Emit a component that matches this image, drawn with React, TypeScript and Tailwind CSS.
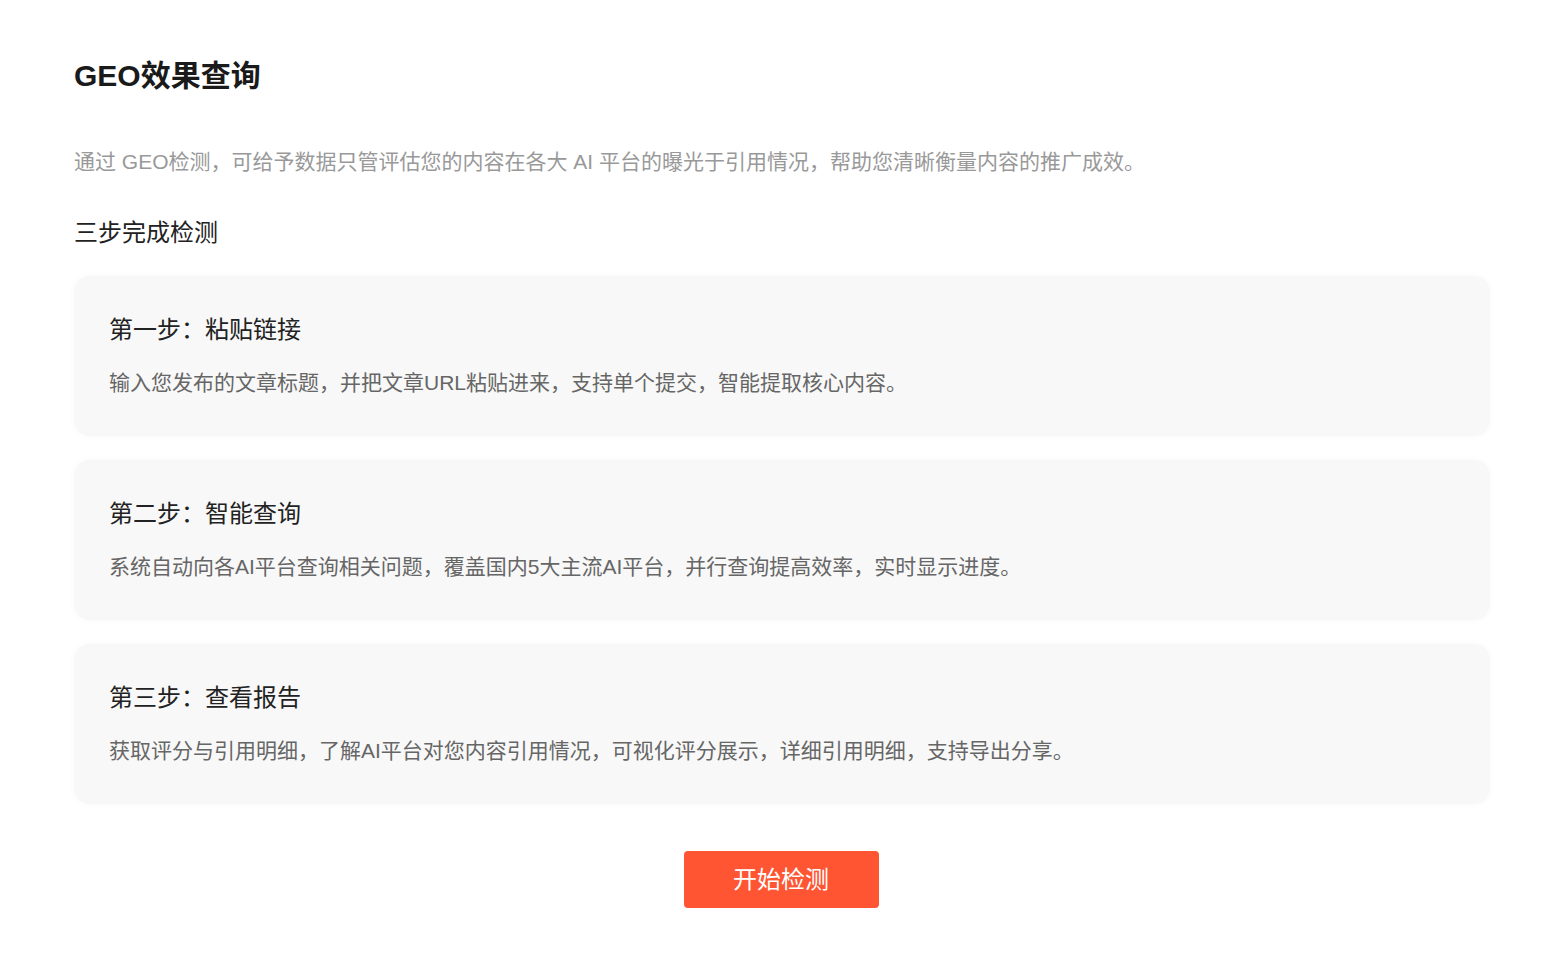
const steps = [
  {
    title: "第一步：粘贴链接",
    desc: "输入您发布的文章标题，并把文章URL粘贴进来，支持单个提交，智能提取核心内容。",
  },
  {
    title: "第二步：智能查询",
    desc: "系统自动向各AI平台查询相关问题，覆盖国内5大主流AI平台，并行查询提高效率，实时显示进度。",
  },
  {
    title: "第三步：查看报告",
    desc: "获取评分与引用明细，了解AI平台对您内容引用情况，可视化评分展示，详细引用明细，支持导出分享。",
  },
];

export default function App() {
  return (
    <div className="min-h-screen bg-white font-['Liberation_Sans','Noto_Sans_CJK_SC',sans-serif]">
      <div className="pl-[74px] pr-[78px] pt-[56px] pb-[53px]">
        <h1 className="text-[30px] leading-[40px] font-bold text-[#1a1a1a]">GEO效果查询</h1>

        <p className="mt-[51px] text-[21px] leading-[30px] text-[#999999]">
          通过 GEO检测，可给予数据只管评估您的内容在各大 AI 平台的曝光于引用情况，帮助您清晰衡量内容的推广成效。
        </p>

        <h2 className="mt-[40px] text-[24px] leading-[32px] text-[#222222]">三步完成检测</h2>

        <div className="mt-[27px] flex flex-col gap-[24px]">
          {steps.map((s) => (
            <div
              key={s.title}
              className="h-[160px] rounded-[16px] bg-[#f8f8f8] pl-[35px] pt-[37px] shadow-[0_0_8px_rgba(0,0,0,0.03)]"
            >
              <div className="text-[24px] leading-[34px] text-[#222222]">{s.title}</div>
              <div className="mt-[22px] text-[21px] leading-[28px] text-[#666666]">{s.desc}</div>
            </div>
          ))}
        </div>

        <div className="mt-[47px] flex justify-center">
          <button className="h-[57px] w-[195px] -translate-x-[1px] rounded-[4px] bg-[#ff5533] text-[24px] text-white">
            开始检测
          </button>
        </div>
      </div>
    </div>
  );
}
